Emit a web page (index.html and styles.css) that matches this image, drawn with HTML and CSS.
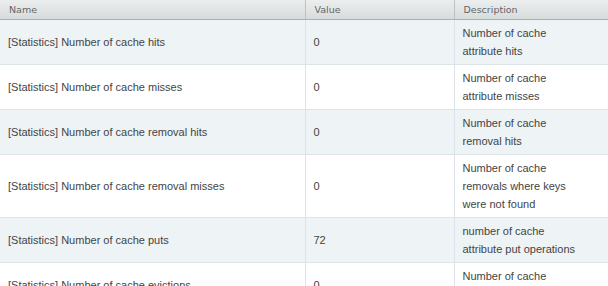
FILE: index.html
```html
<!DOCTYPE html>
<html>
<head>
<meta charset="utf-8">
<link rel="stylesheet" href="styles.css">
</head>
<body>
<table class="grid">
  <colgroup>
    <col class="c-name">
    <col class="c-value">
    <col class="c-desc">
  </colgroup>
  <thead>
    <tr><th>Name</th><th>Value</th><th>Description</th></tr>
  </thead>
  <tbody>
    <tr class="alt"><td>[Statistics] Number of cache hits</td><td>0</td><td><div class="desc">Number of cache attribute hits</div></td></tr>
    <tr><td>[Statistics] Number of cache misses</td><td>0</td><td><div class="desc">Number of cache attribute misses</div></td></tr>
    <tr class="alt"><td>[Statistics] Number of cache removal hits</td><td>0</td><td><div class="desc">Number of cache removal hits</div></td></tr>
    <tr><td>[Statistics] Number of cache removal misses</td><td>0</td><td><div class="desc">Number of cache removals where keys were not found</div></td></tr>
    <tr class="alt"><td>[Statistics] Number of cache puts</td><td>72</td><td><div class="desc">number of cache attribute put operations</div></td></tr>
    <tr><td>[Statistics] Number of cache evictions</td><td>0</td><td><div class="desc">Number of cache evictions</div></td></tr>
  </tbody>
</table>
</body>
</html>
```
FILE: styles.css
```css
html, body {
  margin: 0;
  padding: 0;
  background: #ffffff;
  overflow: hidden;
}
.grid {
  width: 608px;
  border-collapse: collapse;
  table-layout: fixed;
  font-family: "Liberation Sans", Arial, sans-serif;
  font-size: 11px;
  color: #444444;
}
.c-name { width: 305px; }
.c-value { width: 149px; }
.c-desc { width: 154px; }
.grid th {
  height: 19px;
  padding: 0 9px;
  text-align: left;
  font-family: "DejaVu Sans", sans-serif;
  font-weight: normal;
  font-size: 9.5px;
  color: #666666;
  background: linear-gradient(#eceeee, #d6dbdb);
  border-bottom: 1px solid #a6b3b6;
  border-left: 1px solid #b9c2c4;
  vertical-align: middle;
}
.grid th:first-child { border-left: none; }
.grid td {
  padding: 4px 8px;
  line-height: 18px;
  vertical-align: middle;
  border-bottom: 1px solid #dde4e8;
  border-left: 1px solid #dde4e8;
}
.grid td:first-child { border-left: none; }
.grid tr.alt td { background: #eef3f6; }
.desc { width: 122px; }
```
